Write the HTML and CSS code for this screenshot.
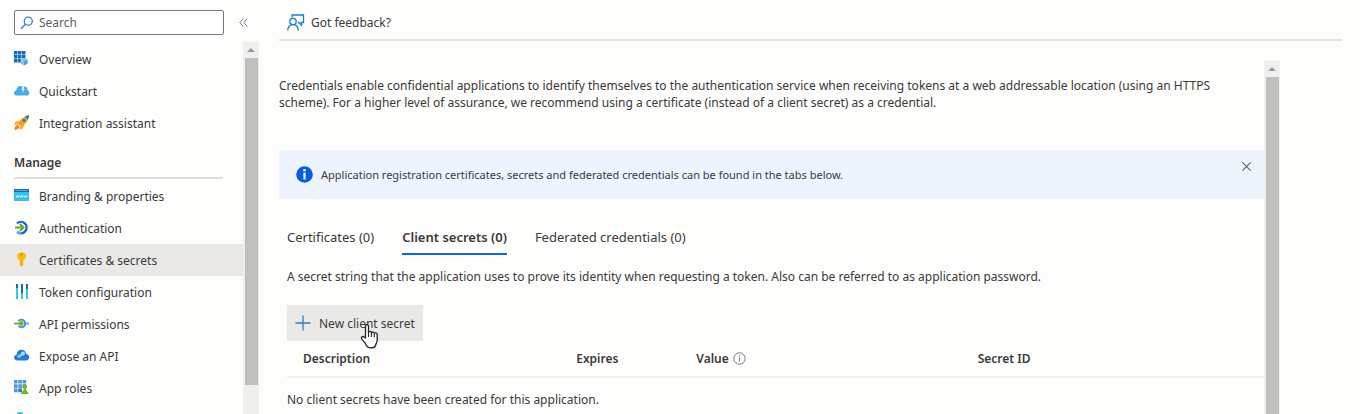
FILE: index.html
```html
<!DOCTYPE html>
<html lang="en">
<head>
<meta charset="utf-8">
<title>Certificates &amp; secrets</title>
<link rel="stylesheet" href="styles.css">
</head>
<body>
<div class="app">
  <aside class="sidebar">
    <div class="search-row">
      <label class="search">
        <svg width="14" height="14" viewBox="0 0 14 14" fill="none" stroke="#2b7fd4" stroke-width="1.3" aria-hidden="true"><circle cx="8.3" cy="5.2" r="4"/><path d="M5.4 8.2 1 12.8"/></svg>
        <input type="text" placeholder="Search" aria-label="Search">
      </label>
      <button class="collapse" aria-label="Collapse menu"><svg width="9" height="9" viewBox="0 0 9 9" fill="none" stroke="#777" stroke-width="1"><path d="M4.2.6.8 4.5l3.4 3.9M8.2.6 4.8 4.5l3.4 3.9"/></svg></button>
    </div>
    <div class="menu-area">
      <nav class="menu">
        <a class="item" href="#"><svg width="16" height="16" viewBox="0 0 16 16"><path fill="#1469bd" d="M0 0h3.500v3.500H0zM4 0h3.500v3.500H4zM8 0h3.500v3.500H8zM0 4h3.500v3.500H0zM4 4h3.500v3.500H4zM8 4h3.500v3.500H8zM0 8h3.500v3.500H0zM4 8h3.500v3.500H4z"/><path fill="#8ccbea" d="m10 6.500 3.500 2v3.900L10 14.400l-3.500-2V8.500z"/><path fill="#4aa3d4" d="m10 10.400 3.500-1.900v3.900L10 14.400z"/></svg>Overview</a>
        <a class="item" href="#"><svg width="16" height="16" viewBox="0 0 16 16"><path fill="#4aa9df" d="M3 12.500C1.200 12.500 0 11.400 0 9.900 0 8.500 1 7.500 2.300 7.400 2.400 4.500 4.200 2.900 6.500 2.900c1 0 1.800.3 2.400.8 2.800-1 4.600.7 4.600 3.700 1.200.2 1.800 1.200 1.800 2.500 0 1.500-1 2.600-2.400 2.600z"/><path fill="#e3f4fc" d="M9 2.500 7.500 7H9L8 10.500l3-4.500H9.700l1-3.500z"/></svg>Quickstart</a>
        <a class="item" href="#"><svg width="16" height="16" viewBox="0 0 16 16"><path fill="#f9b02e" d="M5 5.200 1.200 7.100 0 10.500l3.800-1.200zM10.500 10 8.700 13.500l-3.200 1.500.8-3.500z"/><path fill="#f7a01e" d="M12 1.300 15 0l-.7 3.700c-1 3-3 5.600-7.100 8.400L3.500 8.500C6 5 8.600 2.700 12 1.300z"/><path fill="#1672b8" d="M10.900 1.800 15 0l-1 4.700z"/><circle cx="10" cy="5.400" r="1.600" fill="#2a83b8"/><path fill="#f08a24" d="M3.500 9.600 5.900 11.900C4.400 14.300 2.300 14.300.2 15 .7 13 1.200 10.600 3.500 9.600z"/></svg>Integration assistant</a>
        <h2 class="group">Manage</h2>
        <a class="item" href="#"><svg width="16" height="16" viewBox="0 0 16 16"><path fill="#35bfe9" d="M0 3h15v10H0z"/><path fill="#1769a8" d="M0 1h15v3H0z"/><path fill="#7fb6da" d="M1.500 2h12v.8h-12z"/><path d="m2 7.500.7 1.800.8-1.800.8 1.800.7-1.800m1 0 .7 1.800.8-1.800.8 1.800.7-1.800m1 0 .7 1.800.8-1.800.8 1.800.7-1.800" fill="none" stroke="#eafaff" stroke-width=".8"/></svg>Branding &amp; properties</a>
        <a class="item" href="#"><svg width="16" height="16" viewBox="0 0 16 16" fill="none"><path d="M3 3.400A5.700 5.700 0 1 1 3.500 12.200" stroke="#1565c8" stroke-width="2.400"/><path d="M3 11.700a5.700 5.700 0 0 0 4.500 1.600" stroke="#50b3ee" stroke-width="2.400"/><path d="M1 7.500h8.500M6 4 9.500 7.500 6 11" stroke="#69a72b" stroke-width="2"/></svg>Authentication</a>
        <a class="item selected" href="#" aria-current="page"><svg width="16" height="16" viewBox="0 0 16 16"><path fill="#fdb913" d="M7.500.2c2.700 0 4.600 1.700 4.600 4 0 1.800-1 3.100-2.700 3.800v5.100L7.500 15l-1.800-1.900V8C4 7.300 3 6 3 4.200 3 1.900 4.900.2 7.500.2z"/><circle cx="7.500" cy="2.600" r="1.200" fill="#d88c00"/><path d="M7.500 8.500V13" stroke="#e69300" stroke-width=".8"/></svg>Certificates &amp; secrets</a>
        <a class="item" href="#"><svg width="16" height="16" viewBox="0 0 16 16"><path fill="#1768ae" d="M2 0h2v4H2zM7 0h2v9H7zM12 0h2v5h-2z"/><path fill="#39c4ee" d="M2 4h2v11H2zM7 9h2v6H7zM12 5h2v10h-2z"/></svg>Token configuration</a>
        <a class="item" href="#"><svg width="16" height="16" viewBox="0 0 16 16" fill="none"><path d="M10 7.500h5" stroke="#69aee3" stroke-width="2"/><path d="M4.400 5.200A3.800 3.800 0 1 1 4.400 9.800" stroke="#3c91d1" stroke-width="1.700"/><path d="M0 7.500h6" stroke="#7eb33e" stroke-width="2"/><circle cx="7.300" cy="7.500" r="2.400" fill="#7ab330"/></svg>API permissions</a>
        <a class="item" href="#"><svg width="16" height="16" viewBox="0 0 16 16"><path fill="#237bd6" d="M3.500 12.500C1.400 12.500 0 11.300 0 9.600 0 8 1.100 6.900 2.600 6.700 2.900 3.700 5 1.800 7.500 1.800c2.500 0 4.400 1.600 4.700 4.200 1.800.1 3 1.400 3 3.100 0 2-1.400 3.400-3.400 3.400z"/><path d="m5.500 8.300 3.500-2.600" stroke="#d6eaff" stroke-width="1.500"/><circle cx="5.200" cy="8.300" r="1.800" fill="#8fc2f1"/><circle cx="9" cy="5.500" r="1.900" fill="#b9daf7"/></svg>Expose an API</a>
        <a class="item" href="#"><svg width="16" height="16" viewBox="0 0 16 16"><path fill="#5597dc" d="M0 0h3.600v3.600H0zM4.300 0h3.600v3.600H4.300zM8.600 0h3.600v3.600H8.600zM0 4.300h3.600v3.600H0zM4.300 4.300h3.600v3.600H4.300zM0 8.600h3.600v3.600H0z"/><path fill="#3174c7" d="M8.600 4.300h3.600v3.600H8.600zM4.300 8.600h3.600v3.600H4.300z"/><circle cx="10.800" cy="6.800" r="2.400" fill="#76b52c"/><path fill="#76b52c" d="m10.800 8 4.200 6H6.500z"/></svg>App roles</a>
        <a class="item" href="#" aria-label="Owners"><svg width="16" height="16" viewBox="0 0 16 16"><circle cx="6" cy="3.700" r="3.700" fill="#32bdec"/><path fill="#32bdec" d="M0 14c0-4 2-6 6-6s6 2 6 6z"/></svg></a>
      </nav>
      <div class="scrollbar" aria-hidden="true"><span class="arrow"></span><span class="thumb menu-thumb"></span></div>
    </div>
  </aside>

  <main class="main">
    <div class="toolbar">
      <button class="feedback"><svg width="18" height="18" viewBox="0 0 18 18" fill="none" stroke="#1b7bd0" stroke-width="1.300" aria-hidden="true"><path d="M5 3.500V1h11.500v7.500h-2v2.800L12 8.500h-1"/><circle cx="6" cy="7.500" r="3.200"/><path d="M.7 16.500C1 13 3 10.700 6 10.700s5 2.300 5.300 5.800"/></svg>Got feedback?</button>
    </div>
    <div class="pane">
      <div class="content">
        <p class="intro">Credentials enable confidential applications to identify themselves to the authentication service when receiving tokens at a web addressable location (using an HTTPS scheme). For a higher level of assurance, we recommend using a certificate (instead of a client secret) as a credential.</p>
        <div class="banner">
          <svg width="17" height="17" viewBox="0 0 17 17" aria-hidden="true"><circle cx="8.500" cy="8.500" r="8.300" fill="#085cde"/><circle cx="8.500" cy="4.300" r="1.300" fill="#fff"/><path d="M7.400 6.700h2.200v6.800H7.400z" fill="#fff"/></svg>
          <span class="banner-text">Application registration certificates, secrets and federated credentials can be found in the tabs below.</span>
          <button class="close" aria-label="Dismiss"><svg width="9" height="9" viewBox="0 0 9 9" stroke="#5b6270" stroke-width="1.100"><path d="m.4.4 8.200 8.200M8.600.4.4 8.600"/></svg></button>
        </div>
        <div class="details">
          <div class="tabs" role="tablist">
            <button class="tab" role="tab" aria-selected="false">Certificates (0)</button>
            <button class="tab active" role="tab" aria-selected="true">Client secrets (0)</button>
            <button class="tab" role="tab" aria-selected="false">Federated credentials (0)</button>
          </div>
          <p class="explain">A secret string that the application uses to prove its identity when requesting a token. Also can be referred to as application password.</p>
          <button class="new-secret">
            <svg width="16" height="16" viewBox="0 0 16 16" stroke="#2b7cd3" stroke-width="1.300" aria-hidden="true"><path d="M8 .5v15M.5 8h15"/></svg>New client secret
            <svg class="pointer" width="19" height="25" viewBox="0 0 19 25" aria-hidden="true"><path fill="#fff" stroke="#222" stroke-width="1.300" stroke-linejoin="round" d="M5.500 14V2.300c0-2.200 3-2.200 3 0v6c.3-1.500 2.900-1.300 2.900.5.400-1.300 2.900-1 2.900.7.500-1.200 2.900-.8 2.900 1v5.700c0 2-1.200 3.300-1.700 5.300-.3 1.500-2 2.300-4.700 2.300-2.400 0-3.600-.8-4.300-2.300-.9-2.300-3.300-4.300-4.800-6.500-1-1.600.8-3.200 2.300-2z"/><path d="M8.500 8v5M11.400 9v4M14.300 10v3.500" stroke="#222" stroke-width="1.100"/></svg>
          </button>
          <table class="secrets">
            <thead>
              <tr><th class="description">Description</th><th class="expires">Expires</th><th class="value"><span class="with-info">Value <svg width="13" height="13" viewBox="0 0 13 13" fill="none" stroke="#777" role="img" aria-label="Info"><circle cx="6.500" cy="6.500" r="5.700"/><path d="M6.500 5.500v4M6.500 3.300v1.200"/></svg></span></th><th>Secret ID</th></tr>
            </thead>
            <tbody>
              <tr><td colspan="4">No client secrets have been created for this application.</td></tr>
            </tbody>
          </table>
        </div>
      </div>
      <div class="scrollbar" aria-hidden="true"><span class="arrow"></span><span class="thumb"></span></div>
    </div>
  </main>
</div>
</body>
</html>
```
FILE: styles.css
```css
* { box-sizing: border-box; }
body {
  margin: 0;
  background: #fdfdfc;
  color: #3b3a39;
  font: 12px/17px "Noto Sans", "Open Sans", sans-serif;
}
button { font: inherit; color: inherit; border: 0; background: none; padding: 0; }
svg { display: block; flex: none; }
p, h2 { margin: 0; }

.app { display: flex; height: 100vh; overflow: hidden; }

.sidebar { display: flex; flex-direction: column; flex: none; width: 259px; }
.search-row { display: flex; align-items: center; gap: 15px; padding: 10px 0 7px 14px; }
.search {
  display: flex; align-items: center; gap: 5px;
  width: 210px; height: 25px; padding: 0 5px;
  border: 1px solid #777; border-radius: 2px; background: #fff;
}
.search input { flex: 1; min-width: 0; border: 0; outline: 0; padding: 0; background: none; font: inherit; }
.search input::placeholder { color: #605e5c; opacity: 1; }

.menu-area { display: flex; flex: 1; min-height: 0; }
.menu { flex: 1; min-width: 0; padding-top: 1px; overflow: hidden; }
.item {
  display: flex; align-items: center; gap: 9px;
  height: 32px; padding-left: 14px;
  color: inherit; text-decoration: none;
}
.item.selected { background: #ebe9e8; }
.group {
  height: 40px; margin: 0 20px 1px 14px; padding-top: 15px;
  border-bottom: 2px solid #dededd;
  font-size: 12px; line-height: 17px; font-weight: 600;
}

.scrollbar {
  display: flex; flex-direction: column; align-items: center; flex: none;
  width: 16px; background: #efefee;
}
.arrow { display: flex; align-items: center; justify-content: center; flex: none; height: 16px; }
.arrow::before { content: ""; border: 4px solid transparent; border-top: 0; border-bottom: 4px solid #999; }
.thumb { flex: 1; width: 13px; background: #bfbfbe; }
.menu-thumb { flex: 0 0 88%; }

.main { display: flex; flex-direction: column; flex: 1; min-width: 0; padding: 0 18px 0 20px; }
.toolbar { display: flex; align-items: center; height: 41px; padding: 6px 8px 0; border-bottom: 2px solid #e4e4e3; }
.feedback { display: flex; align-items: center; gap: 6px; }

.pane { display: flex; flex: 1; min-height: 0; margin: 20px 62px 0 0; }
.content { flex: 1; min-width: 0; padding-top: 16px; overflow: hidden; }
.intro { padding-right: 32px; }
.banner {
  display: flex; align-items: center; gap: 8px;
  min-height: 49px; margin-top: 39px; padding: 0 13px 0 17px;
  background: #eef4fe; font-size: 11px;
}
.banner-text { flex: 1; }
.close { align-self: flex-start; padding-top: 12px; }

.details { padding-left: 8px; }
.tabs { display: flex; gap: 28px; margin-top: 28px; font-size: 13px; }
.tab { height: 28px; padding-bottom: 5px; border-bottom: 2px solid transparent; }
.tab.active { border-color: #1068c9; font-weight: 600; }
.explain { margin-top: 13px; }
.new-secret {
  position: relative;
  display: flex; align-items: center; gap: 8px;
  height: 36px; margin-top: 20px; padding: 0 8px;
  background: #ebe9e8;
}
.pointer { position: absolute; left: 73px; top: 19px; }

.secrets { width: 100%; table-layout: fixed; border-collapse: collapse; text-align: left; }
.secrets th { height: 36px; padding: 0; border-bottom: 2px solid #f0f0ef; font-weight: 600; }
.secrets td { height: 44px; padding: 0; }
.secrets .description { width: 29.6%; padding-left: 16px; }
.secrets .expires { width: 12.3%; }
.secrets .value { width: 28.8%; }
.with-info { display: flex; align-items: center; gap: 4px; }
```
